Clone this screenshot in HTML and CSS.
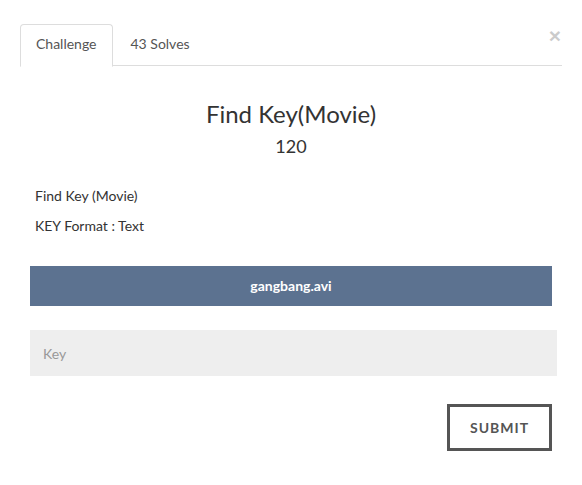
FILE: index.html
```html
<!DOCTYPE html>
<html>
<head>
<meta charset="utf-8">
<link rel="stylesheet" href="styles.css">
</head>
<body>
<div class="modal">
  <div class="tabs">
    <div class="tab active">Challenge</div>
    <div class="tab">43 Solves</div>
    <button class="close" type="button">&times;</button>
  </div>
  <div class="content">
    <h3 class="title">Find Key(Movie)</h3>
    <div class="value">120</div>
    <div class="desc">
      <p>Find Key (Movie)</p>
      <p>KEY Format : Text</p>
    </div>
    <div class="file">gangbang.avi</div>
    <input class="key" type="text" placeholder="Key">
    <div class="actions">
      <button class="submit" type="button">SUBMIT</button>
    </div>
  </div>
</div>
</body>
</html>
```
FILE: styles.css
```css
html, body {
  margin: 0;
  padding: 0;
  background: #fff;
}
body {
  font-family: Lato, "Open Sans", sans-serif;
  font-size: 14px;
  color: #333;
}
.modal {
  padding: 24px 20px 0 20px;
}
.tabs {
  display: flex;
  align-items: flex-start;
  border-bottom: 1px solid #ddd;
  height: 42px;
  box-sizing: border-box;
}
.tab {
  padding: 9px 15px 10px 15px;
  line-height: 20px;
  color: #555;
  border: 1px solid transparent;
  border-radius: 4px 4px 0 0;
  margin-right: 2px;
  height: 42px;
  box-sizing: border-box;
}
.tab.active {
  border-color: #ddd;
  border-bottom-color: transparent;
  background: #fff;
  height: 43px;
}
.close {
  margin-left: auto;
  margin-top: 0;
  margin-right: 1px;
  padding: 0;
  border: 0;
  background: none;
  font-family: "Liberation Sans", Arial, sans-serif;
  font-size: 21px;
  font-weight: bold;
  line-height: 23px;
  color: #000;
  opacity: 0.2;
}
.content {
  padding: 0 5px 0 10px;
}
.title {
  margin: 35px -5px 0 -10px;
  text-align: center;
  font-size: 24px;
  font-weight: 400;
  line-height: 26px;
  color: #333;
}
.value {
  margin: 9px -5px 0 -10px;
  text-align: center;
  font-size: 18px;
  line-height: 20px;
  color: #333;
}
.desc {
  margin-top: 30px;
  padding-left: 5px;
}
.desc p {
  margin: 0 0 10px 0;
  line-height: 20px;
}
.file {
  margin: 30px 5px 0 0;
  height: 40px;
  line-height: 40px;
  background: #5c7290;
  color: #fff;
  font-weight: bold;
  text-align: center;
}
.key {
  display: block;
  width: 100%;
  box-sizing: border-box;
  margin-top: 24px;
  height: 46px;
  padding: 0 13px;
  border: 0;
  background: #eee;
  font-family: Lato, "Open Sans", sans-serif;
  font-size: 14px;
  color: #333;
  outline: none;
}
.key::placeholder {
  color: #999;
}
.actions {
  display: flex;
  justify-content: flex-end;
  margin: 28px 5px 0 0;
}
.submit {
  width: 105px;
  height: 47px;
  border: 3px solid #555;
  background: #fff;
  color: #555;
  font-family: Lato, "Open Sans", sans-serif;
  font-size: 14px;
  font-weight: bold;
  letter-spacing: 1px;
  padding: 0;
}
```
